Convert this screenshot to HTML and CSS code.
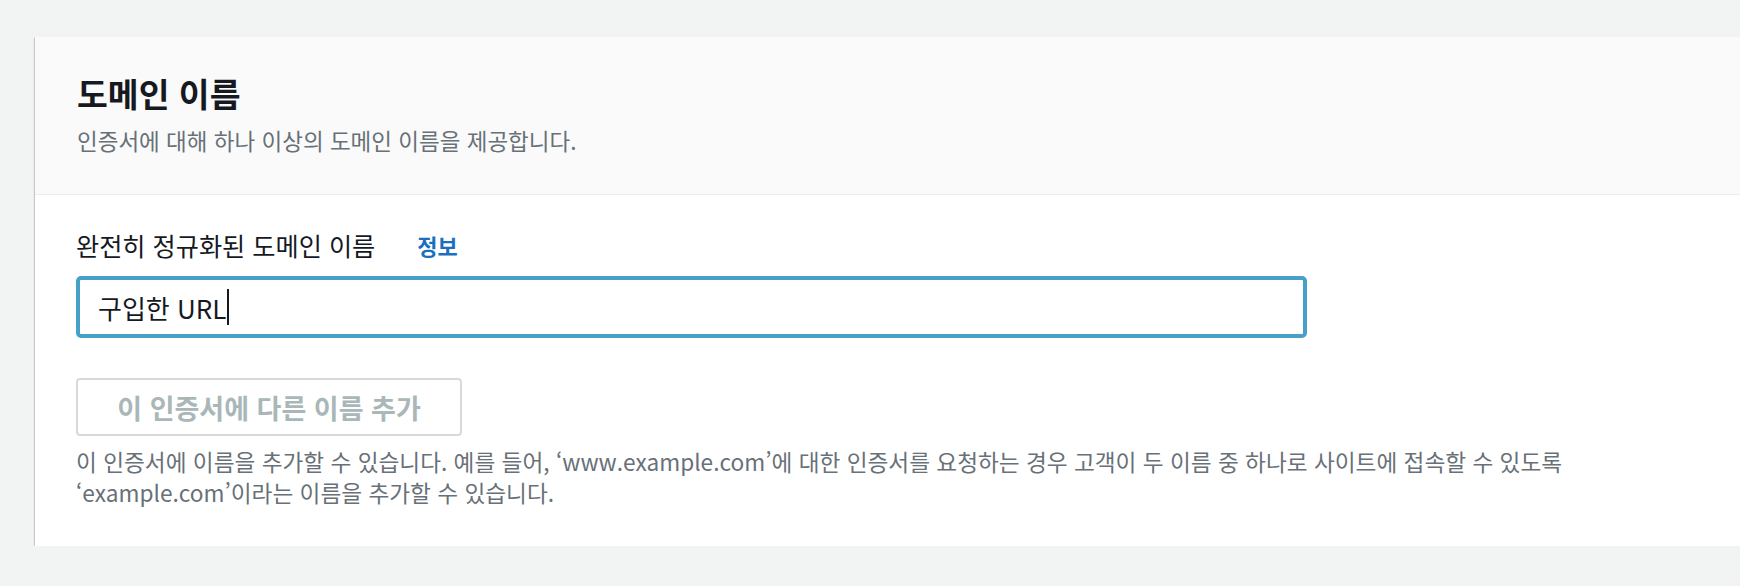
FILE: index.html
```html
<!DOCTYPE html>
<html lang="ko">
<head>
<meta charset="utf-8">
<title>도메인 이름</title>
<link rel="stylesheet" href="styles.css">
</head>
<body>
<div class="page">
  <section class="card">
    <header class="card-header">
      <h2 class="title">도메인 이름</h2>
      <p class="desc">인증서에 대해 하나 이상의 도메인 이름을 제공합니다.</p>
    </header>
    <div class="card-body">
      <div class="label-row">
        <span class="label">완전히 정규화된 도메인 이름</span>
        <a class="info" href="#">정보</a>
      </div>
      <div class="input">
        <span class="value">구입한 URL</span><span class="caret"></span>
      </div>
      <button class="btn" type="button" disabled>이 인증서에 다른 이름 추가</button>
      <p class="help">이 인증서에 이름을 추가할 수 있습니다. 예를 들어, ‘www.example.com’에 대한 인증서를 요청하는 경우 고객이 두 이름 중 하나로 사이트에 접속할 수 있도록<br>‘example.com’이라는 이름을 추가할 수 있습니다.</p>
    </div>
  </section>
</div>
</body>
</html>
```
FILE: styles.css
```css
html, body {
  margin: 0;
  padding: 0;
  overflow: hidden;
  background: #f2f3f3;
}
body {
  font-family: "Noto Sans CJK KR", "Noto Sans", sans-serif;
  color: #16191f;
}
.page {
  padding: 37px 0 0 35px;
}
.card {
  width: 1740px;
  background: #ffffff;
  box-shadow: 0 1px 1px 0 rgba(0, 28, 36, 0.3), 1px 1px 1px 0 rgba(0, 28, 36, 0.15), -1px 1px 1px 0 rgba(0, 28, 36, 0.15);
}
.card-header {
  background: #fafafa;
  border-bottom: 1px solid #eaeded;
  padding: 36px 0 40px 42px;
}
.title {
  margin: 0;
  font-size: 33.5px;
  line-height: 40px;
  font-weight: 700;
  color: #16191f;
}
.desc {
  margin: 13px 0 0;
  font-size: 22.5px;
  line-height: 28px;
  color: #687078;
}
.card-body {
  padding: 35px 0 38px 41px;
}
.label-row {
  display: flex;
  align-items: center;
  gap: 42px;
  height: 30px;
}
.label {
  font-size: 25.2px;
  line-height: 30px;
  color: #16191f;
}
.info {
  font-size: 22px;
  font-weight: 700;
  color: #1a6fbe;
  text-decoration: none;
}
.input {
  box-sizing: border-box;
  margin-top: 16px;
  width: 1231px;
  height: 62px;
  border: 4px solid #47a0c8;
  border-radius: 5px;
  display: flex;
  align-items: center;
  padding-left: 18px;
  background: #ffffff;
}
.value {
  font-size: 26px;
  color: #16191f;
}
.caret {
  width: 2px;
  height: 36px;
  background: #16191f;
  margin-left: 1px;
}
.btn {
  display: block;
  box-sizing: border-box;
  margin-top: 40px;
  width: 386px;
  height: 58px;
  border: 2px solid #d5dbdb;
  border-radius: 4px;
  background: #ffffff;
  font-family: inherit;
  font-size: 27px;
  font-weight: 700;
  color: #aab7b8;
  padding: 0;
}
.help {
  margin: 10px 0 0;
  font-size: 22.65px;
  line-height: 31px;
  color: #687078;
}
```
